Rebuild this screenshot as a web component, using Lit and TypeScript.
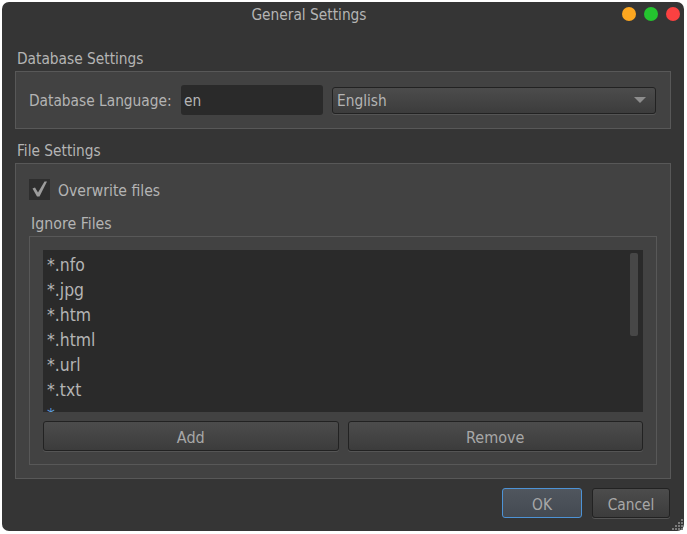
import { LitElement, html, css } from "lit";
import { customElement } from "lit/decorators.js";

const PATTERNS = ["*.nfo", "*.jpg", "*.htm", "*.html", "*.url", "*.txt", "*"];

@customElement("app-root")
export class AppRoot extends LitElement {
  static styles = css`
    :host {
      display: block;
      width: 687px;
      height: 534px;
      background: #fff;
      font-family: "DejaVu Sans Condensed", "DejaVu Sans", sans-serif;
      font-stretch: condensed;
      font-size: 15.3px;
      color: #b4b4b4;
      overflow: hidden;
    }
    .window {
      box-sizing: border-box;
      width: 682px;
      height: 529px;
      margin: 2px 0 0 2px;
      padding: 0 13px;
      background: #353535;
      border-radius: 7px;
      position: relative;
    }
    .titlebar {
      height: 26px;
      margin: 0 55px 0 -13px;
      display: flex;
      align-items: center;
      justify-content: center;
    }
    .lights {
      position: absolute;
      top: 4.5px;
      right: 4px;
      display: flex;
      gap: 8px;
    }
    .lights i {
      width: 14px;
      height: 14px;
      border-radius: 50%;
    }
    .legend {
      box-sizing: border-box;
      height: 34px;
      padding: 10px 0 0 2px;
      display: flex;
      align-items: center;
    }
    .legend.db {
      height: 26px;
      padding-top: 2px;
      margin-top: 17px;
    }
    .legend.inner {
      height: 21px;
      padding: 0 0 5px 2px;
      font-size: 15.8px;
    }
    .group {
      box-sizing: border-box;
      border: 1px solid #585858;
      background: #424242;
    }
    .db-row {
      height: 56px;
      padding: 0 14px 0 13px;
      display: flex;
      align-items: center;
    }
    .db-label {
      width: 152px;
      flex: none;
      margin-top: 2px;
    }
    .input {
      box-sizing: border-box;
      width: 142px;
      height: 30px;
      padding: 2px 0 0 3px;
      background: #2a2a2a;
      border-radius: 3px;
      display: flex;
      align-items: center;
    }
    .select {
      box-sizing: border-box;
      flex: 1;
      height: 27px;
      margin-left: 9px;
      padding: 0 9px 0 4px;
      display: flex;
      align-items: center;
      justify-content: space-between;
      border: 1px solid #222;
      border-radius: 3px;
      background: linear-gradient(#4c4c4c, #3c3c3c);
      box-shadow: 0 1px 0 #555;
    }
    .select-text {
      margin-top: 2px;
    }
    .arrow {
      width: 0;
      height: 0;
      border-left: 6px solid transparent;
      border-right: 6px solid transparent;
      border-top: 6px solid #8d8d8d;
    }
    .files {
      height: 316px;
      padding: 0 13px;
    }
    .check {
      height: 51px;
      display: flex;
      align-items: center;
      gap: 8px;
    }
    .check-text {
      margin-top: 2px;
      font-size: 15.6px;
    }
    .box {
      width: 21px;
      height: 21px;
      background: #2e2e2e;
      display: flex;
      align-items: center;
      justify-content: center;
    }
    .ignore {
      height: 229px;
      padding: 13px 13px 0;
    }
    .list {
      box-sizing: border-box;
      height: 162px;
      background: #2a2a2a;
      padding: 3px 4px;
      position: relative;
      overflow: hidden;
      font-size: 17.4px;
      line-height: 25px;
    }
    .list div:last-of-type {
      color: #5f9fe0;
    }
    .scroll {
      position: absolute;
      top: 3px;
      right: 5px;
      width: 8px;
      height: 83px;
      background: #474747;
      border-radius: 2px;
    }
    .buttons {
      display: flex;
      gap: 9px;
      margin-top: 9px;
    }
    .btn {
      box-sizing: border-box;
      height: 30px;
      padding-top: 3px;
      display: flex;
      align-items: center;
      justify-content: center;
      border: 1px solid #222;
      border-radius: 3px;
      background: linear-gradient(#4c4c4c, #3c3c3c);
      box-shadow: 0 1px 0 #555;
      color: #a8a8a8;
    }
    .buttons .btn {
      flex: 1;
      font-size: 16px;
    }
    .footer {
      display: flex;
      justify-content: flex-end;
      gap: 10px;
      margin-top: 9px;
      padding-right: 1px;
    }
    .footer .btn {
      width: 78px;
    }
    .footer .btn.ok {
      width: 80px;
      border-color: #4d93d6;
      box-shadow: none;
      background: linear-gradient(#50565e, #444a52);
    }
    .grip {
      position: absolute;
      right: 0;
      bottom: 0;
      width: 12px;
      height: 12px;
    }
  `;

  render() {
    return html`
      <div class="window">
        <div class="titlebar">General Settings</div>
        <div class="lights">
          <i style="background:#fda720"></i>
          <i style="background:#24c32f"></i>
          <i style="background:#fb4141"></i>
        </div>
        <div class="legend db">Database Settings</div>
        <div class="group">
          <div class="db-row">
            <span class="db-label">Database Language:</span>
            <div class="input">en</div>
            <div class="select"><span class="select-text">English</span><span class="arrow"></span></div>
          </div>
        </div>
        <div class="legend">File Settings</div>
        <div class="group files">
          <div class="check">
            <span class="box">
              <svg width="17" height="17" viewBox="0 0 17 17">
                <path d="M1.5 7.5L4 6.5L7 11.5L13.5 0.5H16L8.5 15.5H6Z" fill="#9c9c9c" />
              </svg>
            </span>
            <span class="check-text">Overwrite files</span>
          </div>
          <div class="legend inner">Ignore Files</div>
          <div class="group ignore">
            <div class="list">
              ${PATTERNS.map((p) => html`<div>${p}</div>`)}
              <span class="scroll"></span>
            </div>
            <div class="buttons">
              <div class="btn">Add</div>
              <div class="btn">Remove</div>
            </div>
          </div>
        </div>
        <div class="footer">
          <div class="btn ok">OK</div>
          <div class="btn">Cancel</div>
        </div>
        <svg class="grip" viewBox="0 0 12 12" fill="#7a7a7a">
          <rect x="9" y="0" width="2" height="2" />
          <rect x="6" y="3" width="2" height="2" />
          <rect x="9" y="3" width="2" height="2" />
          <rect x="3" y="6" width="2" height="2" />
          <rect x="6" y="6" width="2" height="2" />
          <rect x="9" y="6" width="2" height="2" />
          <rect x="0" y="9" width="2" height="2" />
          <rect x="3" y="9" width="2" height="2" />
          <rect x="6" y="9" width="2" height="2" />
          <rect x="9" y="9" width="2" height="2" />
        </svg>
      </div>
    `;
  }
}
